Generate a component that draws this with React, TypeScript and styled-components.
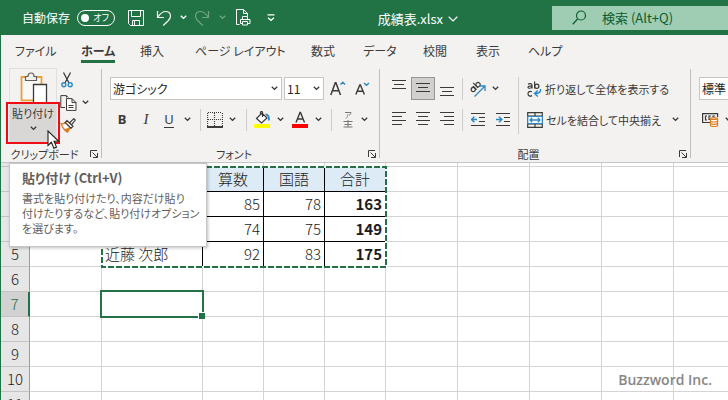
import React from "react";
import styled, { createGlobalStyle, css } from "styled-components";

const green = "#217346";
const ink = "#3b3a39";
const blue = "#2b88c8";

const GlobalStyle = createGlobalStyle`
  *, *::before, *::after { box-sizing: border-box; }
  html, body, #root { height: 100%; }
  body {
    margin: 0;
    background: #fff;
    color: ${ink};
    font-family: "Noto Sans CJK JP", sans-serif;
    font-size: 12px;
    font-feature-settings: "palt";
    overflow: hidden;
  }
  button, input, select { font: inherit; font-feature-settings: inherit; color: inherit; }
`;

/* ---------- shell ---------- */

const Window = styled.div`
  position: relative;
  display: flex;
  flex-direction: column;
  height: 100vh;
  border-left: 1px solid ${green};
  overflow: hidden;
`;

const TitleBar = styled.header`
  display: flex;
  align-items: center;
  flex: none;
  height: 35px;
  background: ${green};
  color: #fff;
`;

const QuickAccess = styled.div`
  display: flex;
  align-items: center;
  flex: 1;
  padding-left: 21px;
`;

const AutoSave = styled.label`
  display: flex;
  align-items: center;
  gap: 7px;
  margin-right: 8px;
  white-space: nowrap;
`;

const Toggle = styled.span`
  position: relative;
  display: flex;
  align-items: center;
  justify-content: flex-end;
  width: 38px;
  height: 16px;
  padding-right: 5px;
  border: 1px solid #fff;
  border-radius: 8px;
  font-size: 9px;
  line-height: 14px;
`;

const ToggleInput = styled.input`
  position: absolute;
  left: 3px;
  top: 3px;
  width: 8px;
  height: 8px;
  margin: 0;
  appearance: none;
  border-radius: 50%;
  background: #fff;
`;

const IconButton = styled.button<{ $w: number; $active?: boolean; $dim?: boolean }>`
  display: flex;
  align-items: center;
  justify-content: center;
  flex: none;
  width: ${(p) => p.$w}px;
  height: 23px;
  padding: 0;
  border: 1px solid transparent;
  background: none;
  opacity: ${(p) => (p.$dim ? 0.35 : 1)};
  svg { flex: none; }
  ${(p) =>
    p.$active &&
    css`
      border-color: #979593;
      background: #d2d0ce;
    `}
`;

const DocTitle = styled.button`
  display: flex;
  align-items: center;
  gap: 5px;
  height: 24px;
  margin: 0 94px 0 0;
  padding: 2px 0 0;
  border: 0;
  background: none;
  font-size: 13px;
  line-height: 20px;
`;

const Search = styled.label`
  display: flex;
  align-items: center;
  gap: 15px;
  width: 176px;
  height: 24px;
  padding-left: 20px;
  background: #9fcdb3;
  color: #0e5c2f;
`;

const SearchInput = styled.input`
  flex: 1;
  min-width: 0;
  padding: 0;
  border: 0;
  outline: 0;
  background: none;
  font-size: 13px;
  line-height: 20px;
  &::placeholder { color: inherit; opacity: 1; }
`;

const Tabs = styled.nav`
  display: grid;
  grid-template-columns: 66px 59px 55px 116px 52px 60px 53px 52px auto;
  flex: none;
  height: 33px;
  padding-left: 14px;
  background: #f3f2f1;
`;

const Tab = styled.button<{ $current?: boolean }>`
  justify-self: start;
  align-self: start;
  height: 28px;
  padding: 6px 0 0;
  border: 0;
  border-bottom: 3px solid ${(p) => (p.$current ? green : "transparent")};
  background: none;
  font-size: 12px;
  line-height: 19px;
  font-weight: ${(p) => (p.$current ? 700 : 400)};
  white-space: nowrap;
`;

/* ---------- ribbon ---------- */

const Ribbon = styled.section`
  display: flex;
  flex: none;
  height: 95px;
  border-bottom: 1px solid #c8c6c4;
  background: #f3f2f1;
`;

const Group = styled.section<{ $w?: number }>`
  display: flex;
  flex-direction: column;
  position: relative;
  flex: ${(p) => (p.$w ? "none" : "1")};
  width: ${(p) => (p.$w ? p.$w + "px" : "auto")};
  min-width: 0;
  overflow: hidden;
  &::after {
    content: "";
    position: absolute;
    right: 0;
    top: 1px;
    bottom: 4px;
    width: 1px;
    background: ${(p) => (p.$w ? "#c0bebc" : "none")};
  }
`;

const GroupBody = styled.div`
  display: flex;
  flex: 1;
`;

const GroupFooter = styled.footer`
  display: flex;
  align-items: center;
  height: 17px;
  padding-right: 2px;
  font-size: 11px;
  line-height: 16px;
  text-align: center;
`;

const GroupName = styled.span`
  flex: 1;
`;

const ToolRows = styled.div<{ $pad: number }>`
  display: flex;
  flex-direction: column;
  gap: 8px;
  padding: 9px 0 0 ${(p) => p.$pad}px;
`;

const ToolRow = styled.div`
  display: flex;
  align-items: center;
  height: 23px;
`;

const Divider = styled.span<{ $w: number; $h?: number }>`
  display: flex;
  justify-content: center;
  flex: none;
  width: ${(p) => p.$w}px;
  height: ${(p) => p.$h ?? 22}px;
  &::before { content: ""; width: 1px; background: #cfcdcb; }
`;

const PasteButton = styled.button`
  display: flex;
  flex-direction: column;
  align-items: center;
  width: 48px;
  height: 76px;
  margin-left: 8px;
  padding: 3px 0 0;
  border: 1px solid #e1dfdd;
  background: linear-gradient(#f3f2f1 34px, #d9d7d5 34px);
  font-size: 11px;
  line-height: 18px;
`;

const PasteText = styled.span`
  margin: 2px 0 4px;
  white-space: nowrap;
`;

const ClipTools = styled.div`
  display: flex;
  flex-direction: column;
`;

const SelectBox = styled.span<{ $w: number }>`
  position: relative;
  display: flex;
  flex: none;
  width: ${(p) => p.$w}px;
  height: 23px;
  margin-right: 2px;
  border: 1px solid #c8c6c4;
  background: #fff;
  svg { position: absolute; right: 3px; top: 8px; pointer-events: none; }
`;

const Select = styled.select`
  width: 100%;
  padding: 0 0 0 2px;
  border: 0;
  appearance: none;
  background: none;
  color: #252423;
  line-height: 18px;
`;

const LetterStyle = styled.span<{ $kind: "b" | "i" | "u" }>`
  font-family: ${(p) => (p.$kind === "i" ? '"Liberation Serif", serif' : '"Noto Sans", sans-serif')};
  font-size: ${(p) => (p.$kind === "i" ? 15 : 13)}px;
  line-height: 16px;
  font-weight: ${(p) => (p.$kind === "b" ? 700 : 400)};
  font-style: ${(p) => (p.$kind === "i" ? "italic" : "normal")};
  border-bottom: 1px solid ${(p) => (p.$kind === "u" ? ink : "transparent")};
`;

const TextTool = styled.button`
  display: flex;
  align-items: center;
  gap: 3px;
  height: 23px;
  padding: 0;
  border: 0;
  background: none;
  font-size: 11px;
  line-height: 20px;
  white-space: nowrap;
`;

const TrailingChevron = styled.span`
  display: flex;
  margin-left: 8px;
`;

/* ---------- sheet ---------- */

const Sheet = styled.main`
  position: relative;
  flex: 1;
  min-height: 0;
  overflow: hidden;
`;

const Grid = styled.table`
  width: 1537px;
  table-layout: fixed;
  border-collapse: separate;
  border-spacing: 0;
  color: #1b1b1b;
  font-size: 15px;
  font-weight: 300;
  line-height: 22px;
`;

const Col = styled.col<{ $w: number }>`
  width: ${(p) => p.$w}px;
`;

const Row = styled.tr<{ $h: number }>`
  height: ${(p) => p.$h}px;
`;

const RowHead = styled.th<{ $selected?: boolean }>`
  padding: 0;
  border-right: ${(p) => (p.$selected ? `2px solid ${green}` : "1px solid #9b9b9b")};
  border-bottom: 1px solid #c4c4c4;
  background: ${(p) => (p.$selected ? "#d2d2d2" : "#e6e6e6")};
  color: ${(p) => (p.$selected ? green : "inherit")};
  font-weight: inherit;
`;

const Cell = styled.td<{ $ruled?: boolean; $head?: boolean; $kind?: "num" | "total" | "name" }>`
  padding: 0 3px 0 3px;
  border-right: 1px solid ${(p) => (p.$ruled ? "#000" : "#d4d4d4")};
  border-bottom: 1px solid ${(p) => (p.$ruled ? "#000" : "#d4d4d4")};
  background: ${(p) => (p.$head ? "#ddebf7" : "#fff")};
  text-align: ${(p) => (p.$head ? "center" : p.$kind === "name" ? "left" : "right")};
  font-weight: ${(p) => (p.$kind === "total" ? 700 : 300)};
  white-space: nowrap;
`;

const CopyOutline = styled.svg`
  position: absolute;
  left: 100px;
  top: 3px;
`;

const ActiveCell = styled.div`
  position: absolute;
  left: 99px;
  top: 127px;
  width: 104px;
  height: 28px;
  border: 2px solid ${green};
  &::after {
    content: "";
    position: absolute;
    right: -3px;
    bottom: -3px;
    width: 7px;
    height: 7px;
    border: solid #fff;
    border-width: 1px 0 0 1px;
    background: ${green};
  }
`;

const Credit = styled.div`
  position: absolute;
  right: 16px;
  bottom: 10px;
  color: #868686;
  font: 600 14px/20px "Open Sans", sans-serif;
`;

/* ---------- overlays ---------- */

const Tooltip = styled.aside`
  position: absolute;
  left: 8px;
  top: 163px;
  width: 198px;
  height: 84px;
  padding: 6px 0 0 12px;
  border: 1px solid #c6c6c6;
  background: #fff;
  box-shadow: 1px 1px 3px rgba(0, 0, 0, 0.25);
  color: #5f5e5c;
  font-size: 11px;
  line-height: 15px;
  white-space: nowrap;
`;

const TooltipTitle = styled.strong`
  display: block;
  margin-bottom: 5px;
  font-size: 13px;
  line-height: 16px;
`;

const Highlight = styled.div`
  position: absolute;
  left: 5px;
  top: 102px;
  width: 54px;
  height: 42px;
  border: 2px solid #f00c14;
`;

const Pointer = styled.svg`
  position: absolute;
  left: 46px;
  top: 130px;
`;

/* ---------- icons ---------- */

const Icon = ({ w, h, children }: { w: number; h: number; children: React.ReactNode }) => (
  <svg width={w} height={h} viewBox={`0 0 ${w} ${h}`} fill="none" stroke="currentColor" aria-hidden="true">
    {children}
  </svg>
);

const Chevron = ({ big }: { big?: boolean }) =>
  big ? (
    <Icon w={10} h={6}><path d="M.7.8 5 5 9.3.8" strokeWidth="1.2" /></Icon>
  ) : (
    <Icon w={7} h={5}><path d="M.8.8 3.5 3.4 6.2.8" strokeWidth="1.4" /></Icon>
  );

const SaveIcon = () => (
  <Icon w={16} h={16}>
    <path d="M.5.5h15v15H2.5l-2-2zM3.5.5v6h9v-6M4.5 15.500v-5h7v5M6.500 11v4" />
  </Icon>
);
const UndoIcon = () => (
  <Icon w={16} h={16}><path d="M1.500 1v6.500h6.500M1.800 7.200C4 4 6.500 1.500 9.500 1.500c3.500 0 5 2.500 5 4.800 0 2.200-1.500 3.700-2.800 5L7.200 15.500" strokeWidth="1.2" /></Icon>
);
const RedoIcon = () => (
  <Icon w={16} h={16}><path d="M14.500 1v6.500H8M14.200 7.200C12 4 9.500 1.500 6.500 1.500c-3.500 0-5 2.500-5 4.800 0 2.200 1.500 3.700 2.800 5l4.500 4.200" strokeWidth="1.2" /></Icon>
);
const PrintIcon = () => (
  <Icon w={15} h={17}>
    <path d="M3.500 15.500h-3V.5h7l4 4V7M7.500.5v4h4" />
    <path d="M6.500 10.500v-3h5v3M4.500 14.500v-4h9.500v4h-2.500M6.500 12.500h5v3.500h-5zM4.500 14.500h2" />
  </Icon>
);
const CustomizeIcon = () => (
  <Icon w={8} h={8}><path d="M.5.8h7M1 3.800l3 2.500 3-2.500" strokeWidth="1.3" /></Icon>
);
const SearchIcon = () => (
  <Icon w={15} h={15}><circle cx="9" cy="5.500" r="4.500" strokeWidth="1.2" /><path d="M5.800 8.800.8 14.200" strokeWidth="1.3" /></Icon>
);

const PasteIcon = () => (
  <Icon w={30} h={30}>
    <path d="M15 28.300H3.500V5H8M17 5h6.500v8" stroke="#e8a33d" strokeWidth="1.800" />
    <rect x="5" y="6.500" width="17" height="20" fill="#faf9f8" stroke="none" />
    <path d="M7.500 8.500v-4H10c0-2.500 1.300-3.500 3-3.500s3 1 3 3.500h2.500v4z" fill="#f3f2f1" stroke="#605e5c" strokeWidth="1.200" />
    <path d="M15.500 31V12.500h13V31" fill="#fff" stroke="#3b3a39" strokeWidth="1.300" />
  </Icon>
);
const CutIcon = () => (
  <Icon w={12} h={16}>
    <path d="M2.500.5 8 11M9.500.5 4 11" strokeWidth="1.300" />
    <circle cx="2.800" cy="12.800" r="2" stroke={blue} strokeWidth="1.400" />
    <circle cx="9.200" cy="12.800" r="2" stroke={blue} strokeWidth="1.400" />
  </Icon>
);
const CopyIcon = () => (
  <Icon w={17} h={16}>
    <path d="M5 12.500H.8V.6h5.500l2 2M6.500.6v2" />
    <path d="M6.500 3.600h5.500l4 4v7.800H6.500zM12 3.600v4h4M8.500 10.500h5M8.500 12.500h5" fill="#fff" />
  </Icon>
);
const BrushIcon = () => (
  <Icon w={16} h={15}>
    <path d="M1 5.500c2 .8 3 .4 4.200-1L11 9.800c-2 1.200-2.800 2.700-3.500 4.500C4.500 12.500 2.500 9.500 1 5.500z" fill="#fff" stroke="#e07b1a" strokeWidth="1.200" />
    <path d="M3 10.500c2 1 4 .3 5.500-1L11 9.800c-2 1.200-2.800 2.700-3.500 4.500C5.500 13.500 4 12 3 10.500z" fill="#e07b1a" stroke="none" />
    <path d="m5.200 4.500 1.800-1.800 6 5.600-2 1.800zM9.500 5l4.300-4.300 1.400 1.400L11.500 6.800" fill="#fff" strokeWidth="1.200" />
  </Icon>
);
const LauncherIcon = () => (
  <Icon w={8} h={8}><path d="M.5 7V.5H7M2.500 2.500l4.500 4.500M7.500 3v4.500H3" /></Icon>
);

const GrowIcon = ({ shrink }: { shrink?: boolean }) =>
  shrink ? (
    <Icon w={15} h={14}>
      <path d="M.8 12.500 4.800 3h.6l4 9.500M2.200 9.300h5.900" strokeWidth="1.400" />
      <path d="m9 1 2.500 2.300L14 1" stroke={blue} strokeWidth="1.400" />
    </Icon>
  ) : (
    <Icon w={16} h={15}>
      <path d="M.8 14 5.300 1.800h.6L10.500 14M2.500 9.800h6.300" strokeWidth="1.500" />
      <path d="M10.500 3.500 12.800 1.200l2.300 2.300" stroke={blue} strokeWidth="1.400" />
    </Icon>
  );
const BordersIcon = () => (
  <Icon w={16} h={16}>
    <path d="M.5 1v13M7.500 1v13M15.500 1v13M1 .5h14M1 7.500h14" strokeDasharray="1 1" strokeWidth="1.200" />
    <path d="M0 15h16" stroke="#000" strokeWidth="1.500" />
  </Icon>
);
const FillIcon = () => (
  <Icon w={16} h={17}>
    <path d="M2.500 7.500 8 2l5 5-5.500 5zM6.500 3.500V1.200c0-.9 2-.9 2 0V6" strokeWidth="1.200" fill="#fff" />
    <path d="M11.500 3.500c2.500 0 3.800 2 3.300 6" stroke={blue} strokeWidth="1.800" />
    <path d="M0 15h16" stroke="#ff0" strokeWidth="4" />
  </Icon>
);
const FontColorIcon = () => (
  <Icon w={16} h={17}>
    <path d="M4 11.500 8 1.500h.5l4 10M5.300 8h5.800" strokeWidth="1.400" />
    <path d="M0 15h16" stroke="#f00" strokeWidth="4" />
  </Icon>
);
const PhoneticIcon = () => (
  <Icon w={10} h={17}>
    <path d="M2 1.500h6C7.800 3 7 3.800 6 4.500M4.800 3.300C4.800 5 4.300 6.300 2.800 7.500" stroke="#797775" />
    <path d="M.5 10.500h9M1.500 13.500h7M.5 16h9M5 9v7" stroke="#797775" />
  </Icon>
);

const lineSets = {
  top: { dy: 0, rows: [[0, 14], [2, 12], [0, 14], [0, 0]] },
  middle: { dy: 3, rows: [[0, 14], [2, 12], [0, 14], [0, 0]] },
  bottom: { dy: 7, rows: [[0, 14], [2, 12], [0, 14], [0, 0]] },
  left: { dy: 1, rows: [[0, 14], [0, 10], [0, 14], [0, 10]] },
  center: { dy: 1, rows: [[0, 14], [2, 12], [0, 14], [2, 12]] },
  right: { dy: 1, rows: [[0, 14], [4, 14], [0, 14], [4, 14]] },
};
const AlignIcon = ({ kind }: { kind: keyof typeof lineSets }) => {
  const { dy, rows } = lineSets[kind];
  return (
    <Icon w={14} h={17}>
      <path
        d={rows.map(([a, b], i) => (b ? `M${a} ${dy + 0.5 + i * 4}H${b}` : "")).join("")}
        strokeWidth="1.200"
      />
    </Icon>
  );
};
const OrientIcon = () => (
  <Icon w={17} h={16}>
    <g transform="rotate(-45 6 6)" strokeWidth="1.200">
      <circle cx="3" cy="6.500" r="2.100" /><path d="M5.300 4v5" />
      <circle cx="9.800" cy="6.500" r="2.100" /><path d="M7.600 1.800v7" />
    </g>
    <path d="M5.500 15.500 15.500 5.500M11 5h5v5" stroke={blue} strokeWidth="1.300" />
  </Icon>
);
const IndentIcon = ({ increase }: { increase?: boolean }) => (
  <Icon w={15} h={15}>
    <path d="M0 1.500h14M8 5.500h6M8 9.500h6M0 13.500h14" strokeWidth="1.200" />
    <path d={increase ? "M0 7.500h5.500M3 4.800l2.800 2.700L3 10.200" : "M6 7.500H.8M3.300 4.800.5 7.500l2.800 2.700"} stroke={blue} strokeWidth="1.500" />
  </Icon>
);
const WrapIcon = () => (
  <Icon w={15} h={16}>
    <g strokeWidth="1.200">
      <path d="M1 3.200c1.500-1 4-.8 4 1V7.500M5 4.800C2.500 4.800 1 5 1 6.200c0 1.500 3 1.300 4-.2M7.600.5v7" />
      <circle cx="9.800" cy="5.200" r="2.100" />
      <path d="M5 10.800c-2-1-4-.2-4 1.900s2 3 4 1.900" />
    </g>
    <path d="M13.500 8c.5 3-1.500 4.500-5.500 4.500M10.800 9.500 7.500 12.500l3.300 3" stroke={blue} strokeWidth="1.400" />
  </Icon>
);
const MergeIcon = () => (
  <Icon w={16} h={16}>
    <path d="M.7.7h14.600v14.600H.7zM.7 4h14.600M.7 12h14.600M8 .7V4M8 12v3.300" strokeWidth="1.200" />
    <path d="M.7 4.500h14.600v7H.7z" fill="#fff" stroke={blue} strokeWidth="1.200" />
    <path d="M3 8h10M5.200 5.800 3 8l2.200 2.200M10.800 5.800 13 8l-2.200 2.200" stroke={blue} strokeWidth="1.300" />
  </Icon>
);
const CurrencyIcon = () => (
  <Icon w={17} h={14}>
    <path d="M8 9.500H.6V.6h15V4" strokeWidth="1.200" />
    <path d="M5 3H3.500v4H5M9 6.500H7V3h2M11 4V3h2" strokeWidth="1.200" />
    <path d="M8.500 5.500v7c0 1.300 7 1.300 7 0v-7" fill="#fff" stroke="#e07b1a" strokeWidth="1.200" />
    <path d="M8.500 5.500c0-1.300 7-1.300 7 0s-7 1.300-7 0M8.500 8c0 1.300 7 1.300 7 0M8.500 10.300c0 1.300 7 1.300 7 0" stroke="#e07b1a" strokeWidth="1.200" />
  </Icon>
);

/* ---------- data ---------- */

const tabs = ["ファイル", "ホーム", "挿入", "ページ レイアウト", "数式", "データ", "校閲", "表示", "ヘルプ"];
const blankColumns = Array.from({ length: 16 }, (_, i) => i);
const columns = [29, 72, 101, 61, 61, 61, ...blankColumns.map(() => 72)];

type RowData = { n?: number; name?: string; values?: (string | number)[]; head?: boolean; h?: number };
const rows: RowData[] = [
  { h: 4 },
  { values: ["算数", "国語", "合計"], head: true },
  { values: [85, 78, 163] },
  { values: [74, 75, 149] },
  { n: 5, name: "近藤 次郎", values: [92, 83, 175] },
  { n: 6 }, { n: 7 }, { n: 8 }, { n: 9 }, { n: 10 }, { n: 11 },
];

const Drop = ({ w, label, dim }: { w: number; label: string; dim?: boolean }) => (
  <IconButton $w={w} $dim={dim} aria-label={label}><Chevron /></IconButton>
);

const Footer = ({ name }: { name: string }) => (
  <GroupFooter>
    <GroupName>{name}</GroupName>
    <IconButton $w={12} aria-label={`${name}の設定`}><LauncherIcon /></IconButton>
  </GroupFooter>
);

export default function App() {
  return (
    <>
      <GlobalStyle />
      <Window>
        <TitleBar>
          <QuickAccess>
            <AutoSave>
              自動保存
              <Toggle><ToggleInput type="checkbox" />オフ</Toggle>
            </AutoSave>
            <IconButton $w={26} aria-label="上書き保存"><SaveIcon /></IconButton>
            <IconButton $w={30} aria-label="元に戻す"><UndoIcon /></IconButton>
            <Drop w={8} label="元に戻す履歴" />
            <IconButton $w={30} $dim aria-label="やり直し"><RedoIcon /></IconButton>
            <Drop w={10} label="やり直し履歴" dim />
            <IconButton $w={32} aria-label="印刷プレビュー"><PrintIcon /></IconButton>
            <IconButton $w={24} aria-label="カスタマイズ"><CustomizeIcon /></IconButton>
          </QuickAccess>
          <DocTitle>成績表.xlsx<Chevron big /></DocTitle>
          <Search>
            <SearchIcon />
            <SearchInput type="text" aria-label="検索" placeholder="検索 (Alt+Q)" />
          </Search>
        </TitleBar>

        <Tabs>
          {tabs.map((t) => <Tab key={t} $current={t === "ホーム"}>{t}</Tab>)}
        </Tabs>

        <Ribbon>
          <Group $w={101}>
            <GroupBody>
              <PasteButton>
                <PasteIcon />
                <PasteText>貼り付け</PasteText>
                <Chevron />
              </PasteButton>
              <ClipTools>
                <ToolRow><IconButton $w={20} aria-label="切り取り"><CutIcon /></IconButton></ToolRow>
                <ToolRow>
                  <IconButton $w={22} aria-label="コピー"><CopyIcon /></IconButton>
                  <Drop w={12} label="コピーのオプション" />
                </ToolRow>
                <ToolRow><IconButton $w={22} aria-label="書式のコピー"><BrushIcon /></IconButton></ToolRow>
              </ClipTools>
            </GroupBody>
            <Footer name="クリップボード" />
          </Group>

          <Group $w={278}>
            <GroupBody>
              <ToolRows $pad={8}>
                <ToolRow>
                  <SelectBox $w={172}>
                    <Select aria-label="フォント"><option>游ゴシック</option></Select>
                    <Chevron />
                  </SelectBox>
                  <SelectBox $w={40}>
                    <Select aria-label="フォント サイズ"><option>11</option></Select>
                    <Chevron />
                  </SelectBox>
                  <IconButton $w={24} aria-label="拡大"><GrowIcon /></IconButton>
                  <IconButton $w={24} aria-label="縮小"><GrowIcon shrink /></IconButton>
                </ToolRow>
                <ToolRow>
                  <IconButton $w={24}><LetterStyle $kind="b">B</LetterStyle></IconButton>
                  <IconButton $w={24}><LetterStyle $kind="i">I</LetterStyle></IconButton>
                  <IconButton $w={22}><LetterStyle $kind="u">U</LetterStyle></IconButton>
                  <Drop w={14} label="下線" />
                  <Divider $w={12} />
                  <IconButton $w={18} aria-label="罫線"><BordersIcon /></IconButton>
                  <Drop w={16} label="罫線の種類" />
                  <Divider $w={12} />
                  <IconButton $w={20} aria-label="塗りつぶし"><FillIcon /></IconButton>
                  <Drop w={16} label="塗りつぶしの色" />
                  <IconButton $w={24} aria-label="文字色"><FontColorIcon /></IconButton>
                  <Drop w={12} label="文字色の選択" />
                  <Divider $w={14} />
                  <IconButton $w={20} aria-label="ふりがな"><PhoneticIcon /></IconButton>
                  <Drop w={12} label="ふりがなのオプション" />
                </ToolRow>
              </ToolRows>
            </GroupBody>
            <Footer name="フォント" />
          </Group>

          <Group $w={311}>
            <GroupBody>
              <ToolRows $pad={7}>
                <ToolRow>
                  <IconButton $w={24} aria-label="上揃え"><AlignIcon kind="top" /></IconButton>
                  <IconButton $w={24} $active aria-label="上下中央揃え"><AlignIcon kind="middle" /></IconButton>
                  <IconButton $w={24} aria-label="下揃え"><AlignIcon kind="bottom" /></IconButton>
                  <Divider $w={6} />
                  <IconButton $w={24} aria-label="方向"><OrientIcon /></IconButton>
                  <Drop w={12} label="方向の種類" />
                </ToolRow>
                <ToolRow>
                  <IconButton $w={24} aria-label="左揃え"><AlignIcon kind="left" /></IconButton>
                  <IconButton $w={24} aria-label="中央揃え"><AlignIcon kind="center" /></IconButton>
                  <IconButton $w={24} aria-label="右揃え"><AlignIcon kind="right" /></IconButton>
                  <Divider $w={6} />
                  <IconButton $w={26} aria-label="インデントを減らす"><IndentIcon /></IconButton>
                  <IconButton $w={24} aria-label="インデントを増やす"><IndentIcon increase /></IconButton>
                </ToolRow>
              </ToolRows>
              <ToolRows $pad={0}><Divider $w={6} $h={57} /></ToolRows>
              <ToolRows $pad={6}>
                <TextTool><WrapIcon />折り返して全体を表示する</TextTool>
                <TextTool>
                  <MergeIcon />セルを結合して中央揃え
                  <TrailingChevron><Chevron /></TrailingChevron>
                </TextTool>
              </ToolRows>
            </GroupBody>
            <Footer name="配置" />
          </Group>

          <Group>
            <ToolRows $pad={8}>
              <ToolRow>
                <SelectBox $w={110}>
                  <Select aria-label="表示形式"><option>標準</option></Select>
                  <Chevron />
                </SelectBox>
              </ToolRow>
              <ToolRow>
                <IconButton $w={23} aria-label="通貨表示形式"><CurrencyIcon /></IconButton>
                <Drop w={12} label="通貨の種類" />
              </ToolRow>
            </ToolRows>
          </Group>
        </Ribbon>

        <Sheet>
          <Grid>
            <colgroup>{columns.map((w, i) => <Col key={i} $w={w} />)}</colgroup>
            <tbody>
              {rows.map((r, i) => (
                <Row key={i} $h={r.h ?? 25}>
                  <RowHead scope="row" $selected={r.n === 7}>{r.n}</RowHead>
                  <Cell />
                  <Cell $ruled={!!r.values} $kind="name">{r.name}</Cell>
                  {[0, 1, 2].map((c) => (
                    <Cell key={c} $ruled={!!r.values} $head={r.head} $kind={c === 2 && !r.head ? "total" : "num"}>
                      {r.values?.[c]}
                    </Cell>
                  ))}
                  {blankColumns.map((c) => <Cell key={c} />)}
                </Row>
              ))}
            </tbody>
          </Grid>
          <CopyOutline width="286" height="102" viewBox="0 0 286 102" fill="none" aria-hidden="true">
            <rect x="1" y="1" width="284" height="100" stroke="#fff" strokeWidth="2" />
            <rect x="1" y="1" width="284" height="100" stroke={green} strokeWidth="2" strokeDasharray="6 2" />
          </CopyOutline>
          <ActiveCell />
          <Credit>Buzzword Inc.</Credit>
        </Sheet>

        <Tooltip role="tooltip">
          <TooltipTitle>貼り付け (Ctrl+V)</TooltipTitle>
          書式を貼り付けたり、内容だけ貼り<br />
          付けたりするなど、貼り付けオプション<br />
          を選びます。
        </Tooltip>
        <Highlight />
        <Pointer width="13" height="20" viewBox="0 0 13 20" aria-hidden="true">
          <path d="M1 1v14.500l3.400-3.200 2.500 5.900 2.600-1.100L7 11.300h4.700z" fill="#fff" stroke="#222" strokeWidth="1.100" />
        </Pointer>
      </Window>
    </>
  );
}
